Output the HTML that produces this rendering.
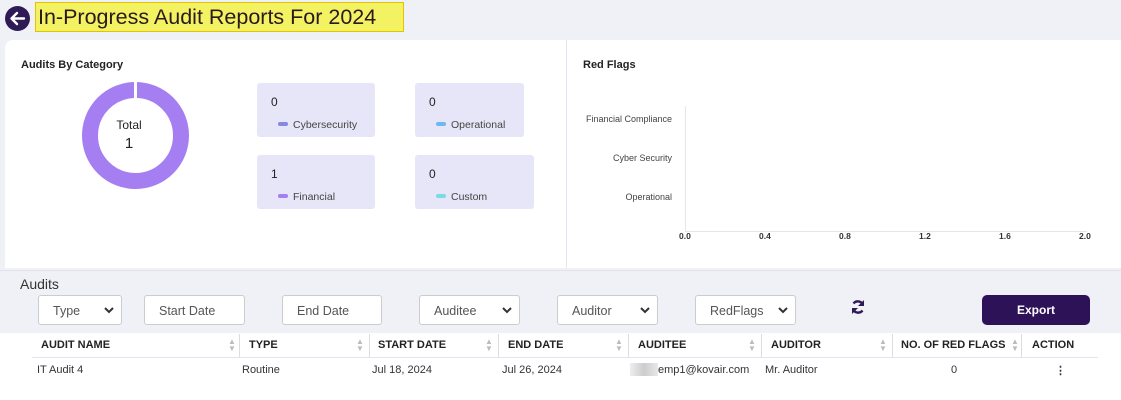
<!DOCTYPE html>
<html><head><style>
*{margin:0;padding:0;box-sizing:border-box}
body{width:1121px;height:400px;background:#f0f1f7;font-family:"Liberation Sans",sans-serif;position:relative;overflow:hidden;color:#222}
.abs{position:absolute}
.title{left:35px;top:2px;width:369px;height:30px;background:#f2f263;border:1px solid #e0c400;font-size:21.5px;line-height:28px;padding-left:2px;color:#2a1a1a;white-space:nowrap;overflow:hidden}
.back{left:5px;top:6px;width:25px;height:25px;border-radius:50%;background:#2e1a55}
.card{left:5px;top:40px;width:1116px;height:228px;background:#fff;border-radius:8px 0 0 0}
.h{font-size:11px;font-weight:bold;color:#222}
.box{background:#e6e6f8;border-radius:3px;width:118px;height:54px}
.box .n{position:absolute;left:14px;top:12px;font-size:12px}
.box .l{position:absolute;left:21px;top:36px;font-size:10.5px;color:#444}
.box .l i{display:inline-block;width:10px;height:4px;border-radius:2px;vertical-align:middle;margin-right:5px;margin-top:-2px}
.sel{background:#fff;border:1px solid #ccc;border-radius:3px;height:30px;top:295px;font-size:12.5px;color:#555;padding:8px 0 0 14px}
.sel svg{position:absolute;right:7px;top:11px}
.th{top:339px;font-size:11px;font-weight:bold;color:#222}
.td{top:364px;font-size:11px;color:#333}
.sep{top:334px;width:1px;height:23px;background:#ddd}
.ar{top:338px;font-size:8px;color:#bbb;line-height:7px}
.yl{font-size:9px;color:#444;text-align:right;width:112px;left:560px}
.xl{top:231px;font-size:8.5px;font-weight:bold;color:#333}
</style></head><body>
<div class="abs back"><svg width="25" height="25" viewBox="0 0 25 25"><path d="M19 12.5H7M12 7l-5.5 5.5L12 18" stroke="#fff" stroke-width="2.4" fill="none" stroke-linecap="round" stroke-linejoin="round"/></svg></div>
<div class="abs title">In-Progress Audit Reports For 2024</div>
<div class="abs card"></div>
<div class="abs" style="left:566px;top:40px;width:1px;height:228px;background:#e4e4f0"></div>
<div class="abs h" style="left:21px;top:59px">Audits By Category</div>
<svg class="abs" style="left:82px;top:82px" width="107" height="107" viewBox="0 0 107 107"><circle cx="53.5" cy="53.5" r="45.5" fill="none" stroke="#a57ef2" stroke-width="16"/><rect x="52" y="0" width="3" height="17" fill="#fff"/></svg>
<div class="abs" style="left:100px;top:118px;width:58px;text-align:center;font-size:12px">Total</div>
<div class="abs" style="left:100px;top:135px;width:58px;text-align:center;font-size:15px">1</div>
<div class="abs box" style="left:257px;top:83px;width:118px"><div class="n">0</div><div class="l"><i style="background:#8888e0"></i>Cybersecurity</div></div>
<div class="abs box" style="left:415px;top:83px;width:109px"><div class="n">0</div><div class="l"><i style="background:#6cb8f0"></i>Operational</div></div>
<div class="abs box" style="left:257px;top:155px;width:118px"><div class="n">1</div><div class="l"><i style="background:#a57ef2"></i>Financial</div></div>
<div class="abs box" style="left:415px;top:155px;width:119px"><div class="n">0</div><div class="l"><i style="background:#7adbe6"></i>Custom</div></div>
<div class="abs h" style="left:583px;top:59px">Red Flags</div>
<div class="abs yl" style="top:114px">Financial Compliance</div>
<div class="abs yl" style="top:153px">Cyber Security</div>
<div class="abs yl" style="top:192px">Operational</div>
<div class="abs" style="left:685px;top:106px;width:1px;height:126px;background:#e6e6e6"></div>
<div class="abs" style="left:685px;top:231px;width:402px;height:1px;background:#e6e6e6"></div>
<div class="abs xl" style="left:679px">0.0</div><div class="abs xl" style="left:759px">0.4</div><div class="abs xl" style="left:839px">0.8</div><div class="abs xl" style="left:919px">1.2</div><div class="abs xl" style="left:999px">1.6</div><div class="abs xl" style="left:1079px">2.0</div>
<div class="abs" style="left:0;top:270px;width:1121px;height:1px;background:#e2e2ea"></div>
<div class="abs" style="left:20px;top:276px;font-size:14px;color:#333">Audits</div>
<div class="abs sel" style="left:38px;width:84px">Type<svg width="10" height="7" viewBox="0 0 10 7"><path d="M1 1l4 4 4-4" stroke="#333" stroke-width="2" fill="none"/></svg></div>
<div class="abs sel" style="left:144px;width:101px">Start Date</div>
<div class="abs sel" style="left:282px;width:100px">End Date</div>
<div class="abs sel" style="left:419px;width:101px">Auditee<svg width="10" height="7" viewBox="0 0 10 7"><path d="M1 1l4 4 4-4" stroke="#333" stroke-width="2" fill="none"/></svg></div>
<div class="abs sel" style="left:557px;width:101px">Auditor<svg width="10" height="7" viewBox="0 0 10 7"><path d="M1 1l4 4 4-4" stroke="#333" stroke-width="2" fill="none"/></svg></div>
<div class="abs sel" style="left:695px;width:101px">RedFlags<svg width="10" height="7" viewBox="0 0 10 7"><path d="M1 1l4 4 4-4" stroke="#333" stroke-width="2" fill="none"/></svg></div>
<svg class="abs" style="left:850px;top:299px" width="16" height="16" viewBox="0 0 16 16"><path d="M13 6A5.5 5.5 0 0 0 3.5 4.5M3 10a5.5 5.5 0 0 0 9.5 1.5" stroke="#2e1a55" stroke-width="2.4" fill="none"/><path d="M14 1v6h-6z" fill="#2e1a55"/><path d="M2 15V9h6z" fill="#2e1a55"/></svg>
<div class="abs" style="left:982px;top:295px;width:108px;height:30px;background:#2e1257;border-radius:5px;color:#fff;font-size:12px;font-weight:bold;text-align:center;line-height:30px">Export</div>
<div class="abs" style="left:0;top:333px;width:1121px;height:67px;background:#fff"></div>
<div class="abs" style="left:32px;top:357px;width:1066px;height:1px;background:#e4e4f0"></div>
<div class="abs th" style="left:41px">AUDIT NAME</div><div class="abs ar" style="left:228px">▲<br>▼</div><div class="abs sep" style="left:239px"></div>
<div class="abs th" style="left:249px">TYPE</div><div class="abs ar" style="left:356px">▲<br>▼</div><div class="abs sep" style="left:369px"></div>
<div class="abs th" style="left:378px">START DATE</div><div class="abs ar" style="left:485px">▲<br>▼</div><div class="abs sep" style="left:498px"></div>
<div class="abs th" style="left:508px">END DATE</div><div class="abs ar" style="left:615px">▲<br>▼</div><div class="abs sep" style="left:628px"></div>
<div class="abs th" style="left:638px">AUDITEE</div><div class="abs ar" style="left:748px">▲<br>▼</div><div class="abs sep" style="left:761px"></div>
<div class="abs th" style="left:771px">AUDITOR</div><div class="abs ar" style="left:879px">▲<br>▼</div><div class="abs sep" style="left:892px"></div>
<div class="abs th" style="left:901px">NO. OF RED FLAGS</div><div class="abs ar" style="left:1011px">▲<br>▼</div><div class="abs sep" style="left:1021px"></div>
<div class="abs th" style="left:1032px">ACTION</div>
<div class="abs td" style="left:37px">IT Audit 4</div>
<div class="abs td" style="left:242px">Routine</div>
<div class="abs td" style="left:372px">Jul 18, 2024</div>
<div class="abs td" style="left:502px">Jul 26, 2024</div>
<div class="abs" style="left:630px;top:363px;width:28px;height:13px;background:linear-gradient(90deg,#eee,#ccc,#e8e8e8)"></div>
<div class="abs td" style="left:658px">emp1@kovair.com</div>
<div class="abs td" style="left:765px">Mr. Auditor</div>
<div class="abs td" style="left:951px">0</div>
<div class="abs td" style="left:1055px;font-weight:bold">⋮</div>
</body></html>
